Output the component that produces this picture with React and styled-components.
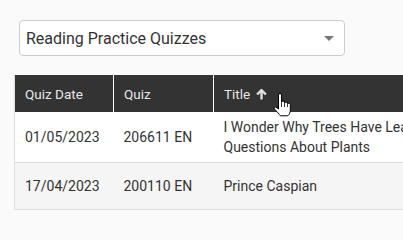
import React from 'react';
import styled, { createGlobalStyle } from 'styled-components';

const GlobalStyle = createGlobalStyle`
  html, body {
    margin: 0;
    padding: 0;
    background: #fafafa;
    font-family: Roboto, 'Liberation Sans', sans-serif;
    overflow: hidden;
  }
`;

const Page = styled.div`
  padding-top: 20px;
  width: 403px;
  height: 212px;
  overflow: hidden;
`;

const Select = styled.div`
  box-sizing: border-box;
  margin-left: 19px;
  width: 326px;
  height: 36px;
  display: flex;
  align-items: center;
  justify-content: space-between;
  padding: 0 10px 0 6px;
  background: #fff;
  border: 1px solid #ccc;
  border-radius: 4px;
  font-size: 16px;
  color: #333;
`;

const Caret = styled.span`
  width: 0;
  height: 0;
  border-left: 5px solid transparent;
  border-right: 5px solid transparent;
  border-top: 5px solid #777;
`;

const TableWrap = styled.div`
  position: relative;
  margin: 19px 0 0 14px;
`;

const Table = styled.table`
  border-collapse: collapse;
  table-layout: fixed;
  width: 520px;
  border-left: 1px solid #ddd;
`;

const Th = styled.th`
  box-sizing: border-box;
  width: ${(p) => p.w}px;
  height: 37px;
  padding: 0 10px;
  background: #333;
  color: #e8e8e8;
  font-size: 13.5px;
  font-weight: 400;
  text-align: left;
  border-right: 1px solid #fff;
  white-space: nowrap;
`;

const SortIcon = styled.svg`
  width: 11px;
  height: 11px;
  margin-left: 6px;
  vertical-align: -1px;
  fill: none;
  stroke: #ddd;
  stroke-width: 2.2;
`;

const Tr = styled.tr`
  background: ${(p) => (p.alt ? '#f5f5f5' : '#fff')};
  border-bottom: 1px solid #ddd;
  height: ${(p) => p.h}px;
`;

const Td = styled.td`
  padding: 0 10px;
  font-size: 14px;
  line-height: 20px;
  color: #333;
  vertical-align: middle;
`;

const Cursor = styled.svg`
  position: absolute;
  left: 259px;
  top: 18px;
  width: 18px;
  height: 24px;
`;

const columns = [
  { label: 'Quiz Date', w: 99 },
  { label: 'Quiz', w: 100 },
  { label: 'Title', w: 321, sorted: true },
];

const rows = [
  {
    date: '01/05/2023',
    quiz: '206611 EN',
    title: 'I Wonder Why Trees Have Leaves and Other Questions About Plants',
    h: 50,
  },
  { date: '17/04/2023', quiz: '200110 EN', title: 'Prince Caspian', h: 47 },
];

export default function App() {
  return (
    <Page>
      <GlobalStyle />
      <Select>
        <span>Reading Practice Quizzes</span>
        <Caret />
      </Select>
      <TableWrap>
        <Table>
          <thead>
            <tr>
              {columns.map((c) => (
                <Th key={c.label} w={c.w}>
                  {c.label}
                  {c.sorted && (
                    <SortIcon viewBox="0 0 10 10">
                      <path d="M5 9.5V1.2M1 5l4-4 4 4" />
                    </SortIcon>
                  )}
                </Th>
              ))}
            </tr>
          </thead>
          <tbody>
            {rows.map((r, i) => (
              <Tr key={r.quiz} alt={i % 2 === 1} h={r.h}>
                <Td>{r.date}</Td>
                <Td>{r.quiz}</Td>
                <Td>{r.title}</Td>
              </Tr>
            ))}
          </tbody>
        </Table>
        <Cursor viewBox="0 0 18 24">
          <path
            d="M5.5 2a1.5 1.5 0 0 1 3 0V9.5a1.5 1.5 0 0 1 3 0V10.5a1.5 1.5 0 0 1 3 0V11.5a1.4 1.4 0 0 1 2.8 0V17c0 2.5-1 4.5-2.5 5.8H7.5C6.3 21.4 4 18.6 1.6 16.2c-1-1 0-2.6 1.4-2L5.5 16Z"
            fill="#fff"
            stroke="#000"
            strokeWidth="1"
            strokeLinejoin="round"
          />
          <path d="M8.5 10v4M11.5 11v3M14.5 12v2" stroke="#000" strokeWidth="0.8" />
        </Cursor>
      </TableWrap>
    </Page>
  );
}
